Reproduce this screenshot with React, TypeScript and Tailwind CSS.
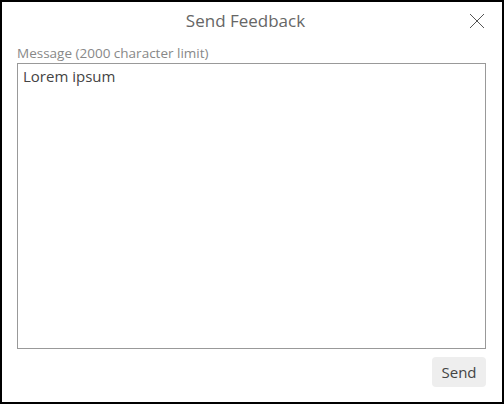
import React from "react";

export default function App() {
  return (
    <div
      className="w-[504px] h-[404px] border-2 border-black bg-white flex flex-col text-[#555]"
      style={{ fontFamily: "'Open Sans', sans-serif" }}
    >
      <div className="relative h-[38px] flex items-center justify-center pr-[13px]">
        <span className="text-[17px] text-[#666]">Send Feedback</span>
        <button className="absolute right-[17px] top-[10px] w-[17px] h-[17px] flex items-center justify-center">
          <svg width="16" height="16" viewBox="0 0 16 16">
            <path d="M1 1L15 15M15 1L1 15" stroke="#555" strokeWidth="1" fill="none" />
          </svg>
        </button>
      </div>
      <div className="flex flex-col px-[15px] flex-1">
        <label className="text-[13.5px] text-[#888] leading-[20px] mt-[3px]">
          Message (2000 character limit)
        </label>
        <textarea
          className="w-[469px] h-[286px] border border-[#999] px-[5px] pt-[1px] text-[15px] text-[#444] resize-none outline-none"
          defaultValue="Lorem ipsum"
        />
        <div className="flex justify-end mt-[8px] pr-[1px]">
          <button className="w-[54px] h-[30px] rounded bg-[#eee] text-[15px] text-[#444]">
            Send
          </button>
        </div>
      </div>
    </div>
  );
}
